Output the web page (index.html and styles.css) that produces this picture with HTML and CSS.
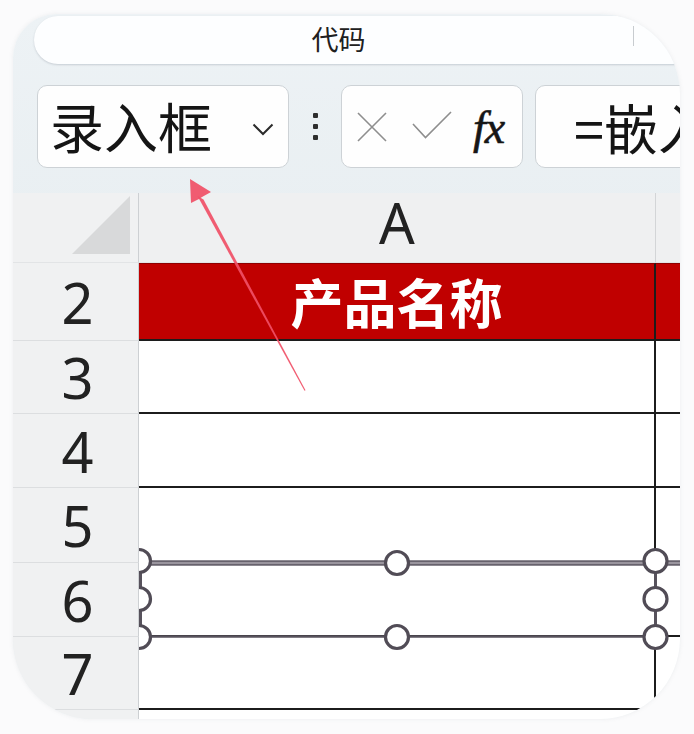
FILE: index.html
```html
<!DOCTYPE html>
<html lang="zh-CN">
<head>
<meta charset="utf-8">
<title>录入框</title>
<link rel="stylesheet" href="styles.css">
</head>
<body>
<div class="card">
  <div class="tabbar">
    <span class="tab-title">代码</span>
    <span class="tab-divider"></span>
  </div>
  <div class="toolbar">
    <div class="box namebox">
      <span class="name">录入框</span>
      <svg class="chevron" width="22" height="13" viewBox="0 0 22 13"><polyline points="1.5,1.5 11,11 20.5,1.5" fill="none" stroke="#2b2b2b" stroke-width="2"/></svg>
    </div>
    <div class="grip"><i></i><i></i><i></i></div>
    <div class="box actions">
      <svg class="x-icon" width="30" height="30" viewBox="0 0 30 30"><path d="M1 1 L29 29 M29 1 L1 29" stroke="#8e8e8e" stroke-width="1.6" fill="none"/></svg>
      <svg class="check" width="40" height="28" viewBox="0 0 40 28"><path d="M1 13 L13.5 26.5 L39 1" stroke="#8e8e8e" stroke-width="1.6" fill="none"/></svg>
      <span class="fx">fx</span>
    </div>
    <div class="box formula">=嵌入</div>
  </div>
  <div class="sheet">
    <div class="row row-head">
      <div class="rh corner"><span class="tri"></span></div>
      <div class="ch col-a">A</div>
      <div class="ch col-b"></div>
    </div>
    <div class="row row-2 title-row">
      <div class="rh">2</div>
      <div class="cell col-a">产品名称</div>
      <div class="cell col-b"></div>
    </div>
    <div class="row row-3">
      <div class="rh">3</div>
      <div class="cell col-a"></div>
      <div class="cell col-b"></div>
    </div>
    <div class="row row-4">
      <div class="rh">4</div>
      <div class="cell col-a"></div>
      <div class="cell col-b"></div>
    </div>
    <div class="row row-5">
      <div class="rh">5</div>
      <div class="cell col-a"></div>
      <div class="cell col-b"></div>
    </div>
    <div class="row row-6">
      <div class="rh">6</div>
      <div class="cell col-a"></div>
      <div class="cell col-b"></div>
    </div>
    <div class="row row-7">
      <div class="rh">7</div>
      <div class="cell col-a"></div>
      <div class="cell col-b"></div>
    </div>
    <div class="row row-8">
      <div class="rh"></div>
      <div class="cell col-a"></div>
      <div class="cell col-b"></div>
    </div>
    <svg class="shape" width="541" height="130" viewBox="0 0 541 130">
      <line x1="0" y1="25" x2="541" y2="25" stroke="#67626c" stroke-width="5.5"/>
      <line x1="0" y1="25" x2="541" y2="25" stroke="#aaa6ae" stroke-width="1.4"/>
      <line x1="0" y1="98.5" x2="516" y2="98.5" stroke="#57525c" stroke-width="2.5"/>
      <line x1="1.5" y1="25" x2="1.5" y2="99" stroke="#57525c" stroke-width="3"/>
      <line x1="516.5" y1="25" x2="516.5" y2="99" stroke="#57525c" stroke-width="3"/>
      <g fill="#fff" stroke="#514c56" stroke-width="3.2">
        <circle cx="0" cy="23" r="11.5"/>
        <circle cx="258" cy="25" r="11.5"/>
        <circle cx="516.5" cy="23" r="11.5"/>
        <circle cx="0" cy="61" r="11.5"/>
        <circle cx="516.5" cy="61" r="11.5"/>
        <circle cx="0" cy="99" r="11.5"/>
        <circle cx="258" cy="99" r="11.5"/>
        <circle cx="516.5" cy="99" r="11.5"/>
      </g>
    </svg>
  </div>
</div>
<svg class="arrow" width="694" height="734" viewBox="0 0 694 734">
  <g fill="#f04f66" fill-opacity="0.92">
    <polygon points="190,179 211,192 202,197 199,199 191,203"/>
    <polygon points="197.5,196 203.5,199.5 305.5,390.3 304.5,390.7"/>
  </g>
</svg>
</body>
</html>
```

FILE: styles.css
```css
* {
  box-sizing: border-box;
}

html, body {
  margin: 0;
  padding: 0;
}

body {
  width: 694px;
  height: 734px;
  background: #fbfbfc;
  font-family: "Noto Sans", "Noto Sans CJK SC", sans-serif;
  color: #1f1f1f;
  position: relative;
  overflow: hidden;
  padding-top: 14px;
  padding-left: 13px;
}

.card {
  width: 667px;
  height: 705px;
  border-radius: 44px 80px 80px 80px;
  overflow: hidden;
  background: linear-gradient(180deg, #edf2f5 0%, #e9eff2 30%, #e9eef1 100%);
  box-shadow: 0 0 4px rgba(120, 130, 140, 0.12);
}

/* top tab bar */
.tabbar {
  margin-top: 2px;
  margin-left: 21px;
  height: 48px;
  background: #fdfeff;
  border-radius: 24px 0 0 24px;
  box-shadow: 0 1px 2px rgba(90, 105, 120, 0.25);
  display: flex;
  align-items: center;
}

.tab-title {
  flex: 1;
  text-align: center;
  padding-left: 10px;
  font-family: "Noto Sans CJK SC", sans-serif;
  font-size: 27px;
  line-height: 1;
  color: #202020;
  margin-top: -3px;
}

.tab-divider {
  width: 1px;
  height: 20px;
  background: #c8ccd0;
  margin-right: 46px;
  margin-top: -8px;
}

/* toolbar */
.toolbar {
  margin-top: 21px;
  padding-left: 24px;
  height: 83px;
  display: flex;
  align-items: stretch;
  flex-wrap: nowrap;
}

.toolbar > * {
  flex-shrink: 0;
}

.box {
  background: #fefefe;
  border: 1px solid #cdd2d6;
  border-radius: 10px;
  display: flex;
  align-items: center;
  white-space: nowrap;
}

.namebox {
  width: 252px;
  padding-left: 12px;
  padding-right: 14px;
  justify-content: space-between;
}

.name {
  font-family: "Noto Sans CJK SC", sans-serif;
  font-size: 54px;
  line-height: 1;
  color: #151515;
  margin-top: -2px;
}

.chevron {
  margin-top: 6px;
  flex-shrink: 0;
}

.grip {
  width: 52px;
  display: flex;
  flex-direction: column;
  align-items: center;
  justify-content: center;
  gap: 6px;
}

.grip i {
  display: block;
  width: 5px;
  height: 5px;
  background: #2e2e2e;
  border-radius: 1px;
}

.actions {
  width: 182px;
  padding-left: 15px;
}

.actions > * {
  flex-shrink: 0;
}

.x-icon {
  margin-top: 1px;
}

.check {
  margin-left: 25px;
  margin-top: -3px;
}

.fx {
  margin-left: 21px;
  font-family: "Liberation Serif", "DejaVu Serif", serif;
  font-style: italic;
  font-size: 46px;
  line-height: 1;
  color: #161616;
  letter-spacing: -1px;
  margin-top: 2px;
  -webkit-text-stroke: 0.6px #161616;
}

.formula {
  margin-left: 12px;
  width: 240px;
  border-radius: 10px 0 0 10px;
  padding-left: 38px;
  font-family: "Noto Sans CJK SC", sans-serif;
  font-size: 54px;
  line-height: 1;
  color: #151515;
}

/* sheet */
.sheet {
  margin-top: 25px;
  position: relative;
}

.row {
  display: grid;
  grid-template-columns: 126px 517px 1fr;
}

.row-head { height: 70px; }
.row-2 { height: 78px; }
.row-3 { height: 73px; }
.row-4 { height: 74px; }
.row-5 { height: 75px; }
.row-6 { height: 74px; }
.row-7 { height: 73px; }
.row-8 { height: 40px; }

.rh {
  background: #f0f1f2;
  border-right: 1px solid #cdd0d3;
  border-bottom: 1px solid #dcdee0;
  display: flex;
  align-items: center;
  justify-content: center;
  padding-left: 4px;
  font-family: "Noto Sans", "Open Sans", sans-serif;
  font-size: 56px;
  line-height: 1;
  color: #222;
}

.corner {
  justify-content: flex-end;
  align-items: flex-end;
  padding: 0 8px 8px 0;
  border-bottom: 1px solid #e2e4e6;
}

.tri {
  display: block;
  width: 58px;
  height: 58px;
  background: #d8d9da;
  clip-path: polygon(100% 0, 100% 100%, 0 100%);
}

.ch {
  background: #eff0f1;
  border-bottom: 1px solid #e2e4e6;
}

.ch.col-a {
  border-right: 1px solid #d3d5d7;
  display: flex;
  align-items: center;
  justify-content: center;
  padding-bottom: 11px;
  font-family: "Noto Sans", "Open Sans", sans-serif;
  font-size: 56px;
  line-height: 1;
  color: #222;
}

.cell {
  background: #fff;
  border-bottom: 2px solid #1c1c1c;
}

.cell.col-a {
  border-right: 2px solid #1c1c1c;
}

.title-row .cell {
  background: #c00000;
  border-top: 1px solid #8f0000;
}

.title-row .col-a {
  display: flex;
  align-items: center;
  justify-content: center;
  font-family: "Noto Sans CJK SC", sans-serif;
  font-weight: 700;
  font-size: 53px;
  line-height: 1;
  color: #fff;
}

.row-8 .cell {
  border-bottom: none;
}

.row-8 .rh {
  border-bottom: none;
}

.shape {
  position: absolute;
  left: 126px;
  top: 345px;
}

.arrow {
  position: absolute;
  left: 0;
  top: 0;
  pointer-events: none;
}
```
